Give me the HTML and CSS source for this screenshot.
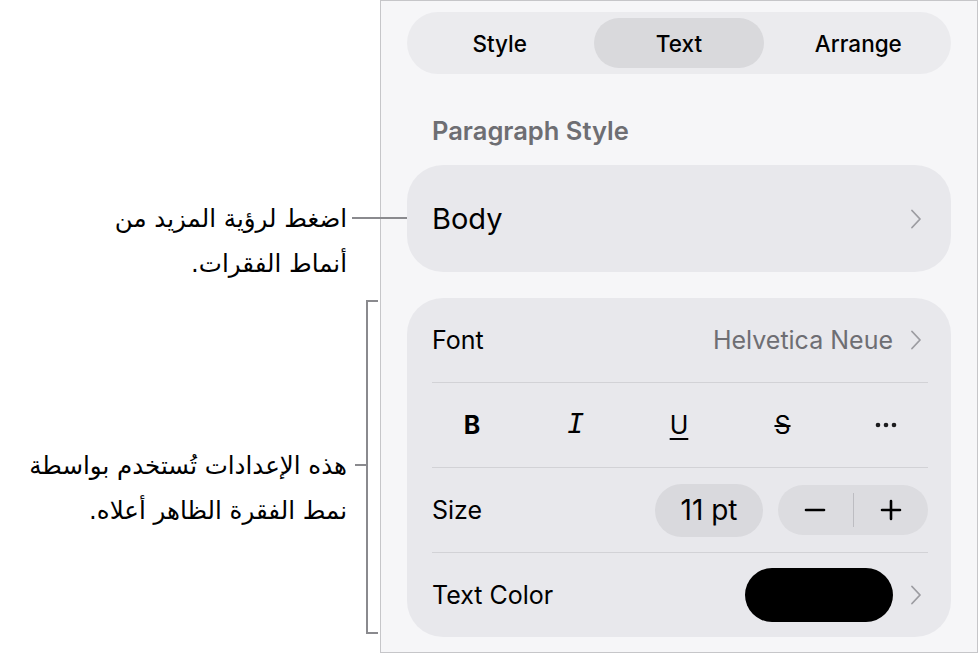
FILE: index.html
```html
<!DOCTYPE html>
<html lang="ar">
  <head>
    <meta charset="UTF-8" />
    <title>Text</title>
    <link rel="stylesheet" href="styles.css">
  </head>
  <body>
    <div class="page">
      <div class="notes">
        <p class="note note-style" dir="rtl">اضغط لرؤية المزيد من<br />أنماط الفقرات.</p>

        <div class="settings-group">
          <p class="note note-settings" dir="rtl">هذه الإعدادات تُستخدم بواسطة<br />نمط الفقرة الظاهر أعلاه.</p>
          <div class="bracket"></div>
        </div>
      </div>

      <section class="panel">
        <nav class="segmented">
          <button class="seg">Style</button>
          <button class="seg active">Text</button>
          <button class="seg">Arrange</button>
        </nav>

        <h3 class="section-title">Paragraph Style</h3>

        <div class="card style-card">
          <span class="style-name">Body</span>
          <svg class="chevron" viewBox="0 0 16 20" width="16" height="20">
            <path d="M4 1.5 L12 10 L4 18.5" />
          </svg>
        </div>

        <div class="card settings-card">
          <div class="row">
            <span class="label">Font</span>
            <span class="value">
              <span class="value-text">Helvetica Neue</span>
              <svg class="chevron" viewBox="0 0 16 20" width="16" height="20">
                <path d="M4 1.5 L12 10 L4 18.5" />
              </svg>
            </span>
          </div>

          <div class="row format-row">
            <button class="fmt fmt-bold">B</button>
            <button class="fmt fmt-italic">I</button>
            <button class="fmt fmt-underline">U</button>
            <button class="fmt fmt-strike">S</button>
            <button class="fmt fmt-more">
              <svg viewBox="0 0 24 6" width="24" height="6">
                <circle cx="4" cy="3" r="2.3" />
                <circle cx="12" cy="3" r="2.3" />
                <circle cx="20" cy="3" r="2.3" />
              </svg>
            </button>
          </div>

          <div class="row">
            <span class="label">Size</span>
            <span class="value">
              <span class="size-pill">11 pt</span>
              <span class="stepper">
                <button class="step">
                  <svg viewBox="0 0 22 22" width="22" height="22"><path d="M2 11 H20" /></svg>
                </button>
                <span class="step-divider"></span>
                <button class="step">
                  <svg viewBox="0 0 22 22" width="22" height="22"><path d="M2 11 H20 M11 2 V20" /></svg>
                </button>
              </span>
            </span>
          </div>

          <div class="row">
            <span class="label">Text Color</span>
            <span class="value">
              <span class="swatch"></span>
              <svg class="chevron" viewBox="0 0 16 20" width="16" height="20">
                <path d="M4 1.5 L12 10 L4 18.5" />
              </svg>
            </span>
          </div>
        </div>
      </section>
    </div>
  </body>
</html>
```

FILE: styles.css
```css
body {
  margin: 0;
  background: #ffffff;
  font-family: Inter, "Noto Sans", sans-serif;
  color: #000;
}

.page {
  display: flex;
  width: 979px;
  height: 654px;
}

/* callouts on the left */

.notes {
  width: 380px;
  display: flex;
  flex-direction: column;
  align-items: flex-end;
  padding-top: 196px;
  box-sizing: border-box;
}

.note {
  position: relative;
  margin: 0;
  font-family: "DejaVu Sans", sans-serif;
  font-size: 24.5px;
  line-height: 45px;
  text-align: right;
  color: #000;
}

.note-style {
  margin-right: 33px;
}

.note-style::after {
  content: "";
  position: absolute;
  left: calc(100% + 5px);
  top: 21px;
  width: 55px;
  height: 2px;
  background: #8a8a8e;
}

.settings-group {
  display: flex;
  height: 334px;
  margin-top: 14px;
  margin-right: 2px;
}

.note-settings {
  margin: 143px 19px 0 0;
  align-self: flex-start;
}

.note-settings::after {
  content: "";
  position: absolute;
  left: calc(100% + 8px);
  top: 21px;
  width: 11px;
  height: 2px;
  background: #8a8a8e;
}

.bracket {
  width: 12px;
  box-sizing: border-box;
  border: 2px solid #8a8a8e;
  border-right: none;
}

/* inspector panel */

.panel {
  width: 598px;
  height: 653px;
  box-sizing: border-box;
  border: 1px solid #c6c6c9;
  background: #f6f6f8;
  padding: 11px 26px 0;
}

button {
  font: inherit;
  color: inherit;
  background: none;
  border: none;
  padding: 0;
  cursor: pointer;
}

.segmented {
  height: 62px;
  box-sizing: border-box;
  padding: 6px 8px;
  border-radius: 31px;
  background: #ebebee;
  display: grid;
  grid-template-columns: repeat(3, 1fr);
  column-gap: 10px;
}

.seg {
  border-radius: 25px;
  font-size: 22.5px;
  font-weight: 500;
}

.seg.active {
  background: #d9d9dc;
}

.section-title {
  margin: 43px 0 20px 25px;
  font-size: 25.5px;
  line-height: 28px;
  font-weight: 600;
  color: #6e6e73;
}

.card {
  background: #e8e8ec;
  border-radius: 36px;
  padding: 0 23px 0 25px;
}

.style-card {
  height: 107px;
  display: flex;
  align-items: center;
  justify-content: space-between;
}

.style-name {
  font-size: 29px;
}

.chevron {
  display: block;
  margin-right: 4px;
}

.chevron path {
  fill: none;
  stroke: #9c9ca1;
  stroke-width: 1.8;
  stroke-linecap: round;
  stroke-linejoin: round;
}

.settings-card {
  margin-top: 26px;
}

.row {
  height: 84px;
  display: flex;
  align-items: center;
  justify-content: space-between;
}

.row + .row {
  border-top: 1px solid #d2d2d6;
}

.label {
  font-size: 25px;
}

.value {
  display: flex;
  align-items: center;
  gap: 15px;
}

.value-text {
  font-size: 25px;
  color: #6e6e73;
}

.format-row {
  padding: 0 22px 0 20px;
}

.fmt {
  width: 40px;
  height: 40px;
  display: flex;
  align-items: center;
  justify-content: center;
  font-size: 25px;
}

.fmt-bold {
  font-weight: 700;
}

.fmt-italic {
  font-family: "Liberation Mono", monospace;
  font-style: italic;
  font-size: 29px;
}

.fmt-underline {
  text-decoration: underline;
  text-decoration-thickness: 2px;
  text-underline-offset: 4px;
}

.fmt-strike {
  text-decoration: line-through;
  text-decoration-thickness: 1.5px;
}

.fmt-more svg {
  fill: #1c1c1e;
}

.size-pill {
  width: 108px;
  height: 53px;
  border-radius: 27px;
  background: #d9d9dd;
  display: flex;
  align-items: center;
  justify-content: center;
  font-size: 28px;
}

.stepper {
  width: 150px;
  height: 50px;
  border-radius: 25px;
  background: #dcdce0;
  display: flex;
  align-items: center;
}

.step {
  flex: 1;
  height: 100%;
  display: flex;
  align-items: center;
  justify-content: center;
}

.step svg path {
  stroke: #000;
  stroke-width: 2.6;
  stroke-linecap: round;
}

.step-divider {
  width: 1px;
  height: 34px;
  background: #bdbdc2;
}

.swatch {
  width: 148px;
  height: 54px;
  border-radius: 27px;
  background: #000;
}
```
